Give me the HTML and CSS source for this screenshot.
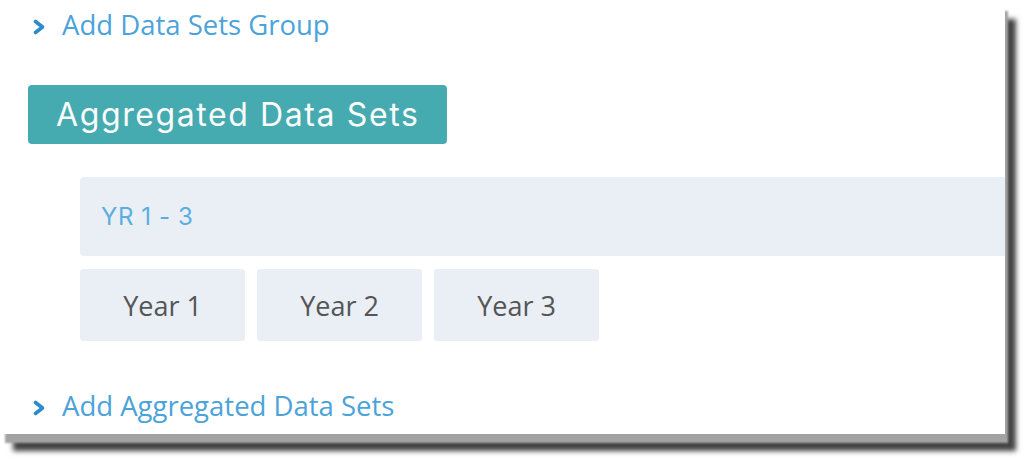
FILE: index.html
```html
<!DOCTYPE html>
<html lang="en">
<head>
    <meta charset="UTF-8">
    <meta name="viewport" content="width=device-width, initial-scale=1.0">
    <title>Aggregated Data Sets</title>
    <link rel="stylesheet" href="styles.css">
</head>
<body>
    <div class="panel">
        <a href="#" class="add-link add-top">
            <svg class="chevron" width="13" height="16" viewBox="0 0 13 16"><polyline points="2.5,2.5 9.5,8 2.5,13.5" fill="none" stroke="#2b8bcb" stroke-width="3.6" stroke-linecap="round" stroke-linejoin="round"/></svg>
            <span>Add Data Sets Group</span>
        </a>

        <div class="agg-title">Aggregated Data Sets</div>

        <div class="group">
            <div class="group-head">YR 1 - 3</div>
            <div class="years">
                <div class="year">Year 1</div>
                <div class="year">Year 2</div>
                <div class="year">Year 3</div>
            </div>
        </div>

        <a href="#" class="add-link add-bottom">
            <svg class="chevron" width="13" height="16" viewBox="0 0 13 16"><polyline points="2.5,2.5 9.5,8 2.5,13.5" fill="none" stroke="#2b8bcb" stroke-width="3.6" stroke-linecap="round" stroke-linejoin="round"/></svg>
            <span>Add Aggregated Data Sets</span>
        </a>
    </div>
</body>
</html>
```

FILE: styles.css
```css
body {
    margin: 0;
    min-height: 464px;
    background-color: #fff;
    font-family: "Open Sans", "Liberation Sans", sans-serif;
}
.panel {
    width: 1005px;
    height: 434px;
    box-sizing: border-box;
    padding: 8px 0 0 28px;
    background-color: #fff;
    box-shadow: 4px 10px 2px -1px #a3a3a3, 12px 18px 5px -1px #444;
}
.add-link {
    display: flex;
    align-items: center;
    height: 32px;
    padding-left: 5px;
    text-decoration: none;
    color: #4ba3da;
    font-size: 27.5px;
}
.chevron {
    margin-right: 16px;
    margin-top: 5px;
}
.agg-title {
    display: inline-block;
    margin-top: 45px;
    height: 59px;
    line-height: 59px;
    padding: 0 28px 0 28px;
    border-radius: 4px;
    background-color: #45abb0;
    color: #fbfbfb;
    font-family: "Inter", "Lato", sans-serif;
    font-size: 32px;
    letter-spacing: 1.6px;
}
.group {
    margin: 33px 0 0 52px;
}
.group-head {
    height: 79px;
    display: flex;
    align-items: center;
    padding-left: 21px;
    border-radius: 4px 0 0 4px;
    background-color: #eaeef5;
    color: #5aaee0;
    font-family: "Inter", "Lato", sans-serif;
    font-size: 24px;
    letter-spacing: 0.6px;
}
.years {
    display: flex;
    gap: 12px;
    margin-top: 13px;
}
.year {
    width: 165px;
    height: 72px;
    display: flex;
    align-items: center;
    justify-content: center;
    border-radius: 3px;
    background-color: #eaeef5;
    color: #555;
    font-size: 27px;
}
.add-bottom {
    margin-top: 48px;
}
```
